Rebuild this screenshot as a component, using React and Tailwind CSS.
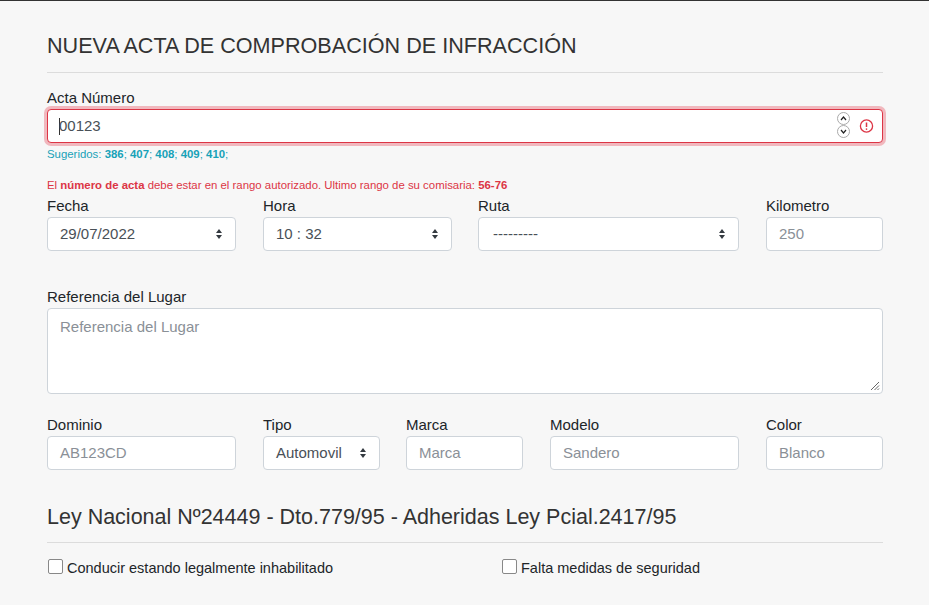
import React from 'react';

const F = { fontFamily: '"Liberation Sans", Arial, sans-serif' };

const Label = ({ children }) => <label className="block text-[15px] text-[#212529] leading-[18px] mb-[2px]">{children}</label>;

const Arrows = () => (
  <svg width="8" height="12" viewBox="0 0 8 12" className="absolute right-[12px] top-1/2 -translate-y-1/2">
    <path d="M4 1 L7 5 H1 Z M4 11 L7 7 H1 Z" fill="#343a40" />
  </svg>
);

const Input = ({ w, placeholder, value }) => (
  <div className={`${w} h-[34px] bg-white border border-[#ced4da] rounded-[4px] px-[12px] flex items-center text-[15px] ${value ? 'text-[#495057]' : 'text-[#8a9097]'}`}>
    {value || placeholder}
  </div>
);

const Select = ({ w, value, center }) => (
  <div className={`${w} relative h-[34px] bg-white border border-[#ced4da] rounded-[4px] px-[12px] flex items-center text-[15px] text-[#495057]`}>
    <span className={center ? 'pl-[2px]' : ''}>{value}</span>
    <Arrows />
  </div>
);

const Check = ({ children }) => (
  <label className="flex items-center gap-[4px] text-[14.5px] text-[#212529]">
    <span className="w-[15px] h-[15px] bg-white border border-[#888] rounded-[2px] inline-block -mt-[4px]" />
    {children}
  </label>
);

export default function App() {
  return (
    <div style={F} className="w-[929px] h-[605px] overflow-hidden bg-[#f7f7f7] border-t border-[#333]">
      <div className="ml-[47px] w-[836px] pt-[31px]">
        <h1 className="text-[21.6px] text-[#333] leading-[28px] pb-[12px] border-b border-[#dcdcdc]">NUEVA ACTA DE COMPROBACIÓN DE INFRACCIÓN</h1>

        <div className="mt-[16px]">
          <Label>Acta Número</Label>
          <div className="relative h-[34px] bg-white border border-[#dc3545] rounded-[4px] ring-[3px] ring-[#f1b8be] px-[11px] flex items-center text-[15px] text-[#495057]">
            <span className="w-px h-[17px] bg-[#333] mr-[-1px]" />00123
            <div className="absolute right-[32px] top-[2px] flex flex-col">
              <span className="w-[13px] h-[13px] border border-[#aaa] rounded-full flex items-center justify-center">
                <svg width="7" height="5" viewBox="0 0 7 5"><path d="M1 4 L3.5 1 L6 4" stroke="#222" fill="none" strokeWidth="1.2" /></svg>
              </span>
              <span className="w-[13px] h-[13px] border border-[#aaa] rounded-full flex items-center justify-center">
                <svg width="7" height="5" viewBox="0 0 7 5"><path d="M1 1 L3.5 4 L6 1" stroke="#222" fill="none" strokeWidth="1.2" /></svg>
              </span>
            </div>
            <svg width="15" height="15" viewBox="0 0 16 16" className="absolute right-[8px] top-1/2 -translate-y-1/2">
              <circle cx="8" cy="8" r="6.5" stroke="#dc3545" strokeWidth="1.4" fill="none" />
              <path d="M8 4.3 V9" stroke="#dc3545" strokeWidth="1.6" />
              <circle cx="8" cy="11.3" r="0.9" fill="#dc3545" />
            </svg>
          </div>
          <div className="text-[11.4px] text-[#17a2b8] mt-[4px] leading-[14px]">
            Sugeridos: <b>386</b>; <b>407</b>; <b>408</b>; <b>409</b>; <b>410</b>;
          </div>
          <div className="text-[11.4px] text-[#dc3545] mt-[17px] leading-[14px]">
            El <b>número de acta</b> debe estar en el rango autorizado. Ultimo rango de su comisaria: <b>56-76</b>
          </div>
        </div>

        <div className="flex mt-[5px]">
          <div className="w-[189px] mr-[27px]"><Label>Fecha</Label><Select w="w-full" value="29/07/2022" /></div>
          <div className="w-[189px] mr-[26px]"><Label>Hora</Label><Select w="w-full" value="10 : 32" /></div>
          <div className="w-[261px] mr-[27px]"><Label>Ruta</Label><Select w="w-full" value="---------" center /></div>
          <div className="w-[117px]"><Label>Kilometro</Label><Input w="w-full" placeholder="250" /></div>
        </div>

        <div className="mt-[37px]">
          <Label>Referencia del Lugar</Label>
          <div className="relative h-[86px] bg-white border border-[#ced4da] rounded-[4px] px-[12px] pt-[7px] text-[15px] text-[#8a9097]">
            Referencia del Lugar
            <svg width="10" height="10" viewBox="0 0 10 10" className="absolute right-[2px] bottom-[2px]">
              <path d="M9 1 L1 9 M9 4.5 L4.5 9 M9 7.5 L7.5 9" stroke="#666" strokeWidth="1" />
            </svg>
          </div>
        </div>

        <div className="flex mt-[22px]">
          <div className="w-[189px] mr-[27px]"><Label>Dominio</Label><Input w="w-full" placeholder="AB123CD" /></div>
          <div className="w-[117px] mr-[26px]"><Label>Tipo</Label><Select w="w-full" value="Automovil" /></div>
          <div className="w-[117px] mr-[27px]"><Label>Marca</Label><Input w="w-full" placeholder="Marca" /></div>
          <div className="w-[189px] mr-[27px]"><Label>Modelo</Label><Input w="w-full" placeholder="Sandero" /></div>
          <div className="w-[117px]"><Label>Color</Label><Input w="w-full" placeholder="Blanco" /></div>
        </div>

        <h2 className="mt-[33px] text-[21.5px] text-[#333] leading-[28px] pb-[11px] border-b border-[#dcdcdc]">Ley Nacional Nº24449 - Dto.779/95 - Adheridas Ley Pcial.2417/95</h2>

        <div className="flex mt-[15px] pl-[1px]">
          <div className="w-[454px]"><Check>Conducir estando legalmente inhabilitado</Check></div>
          <Check>Falta medidas de seguridad</Check>
        </div>
      </div>
    </div>
  );
}
